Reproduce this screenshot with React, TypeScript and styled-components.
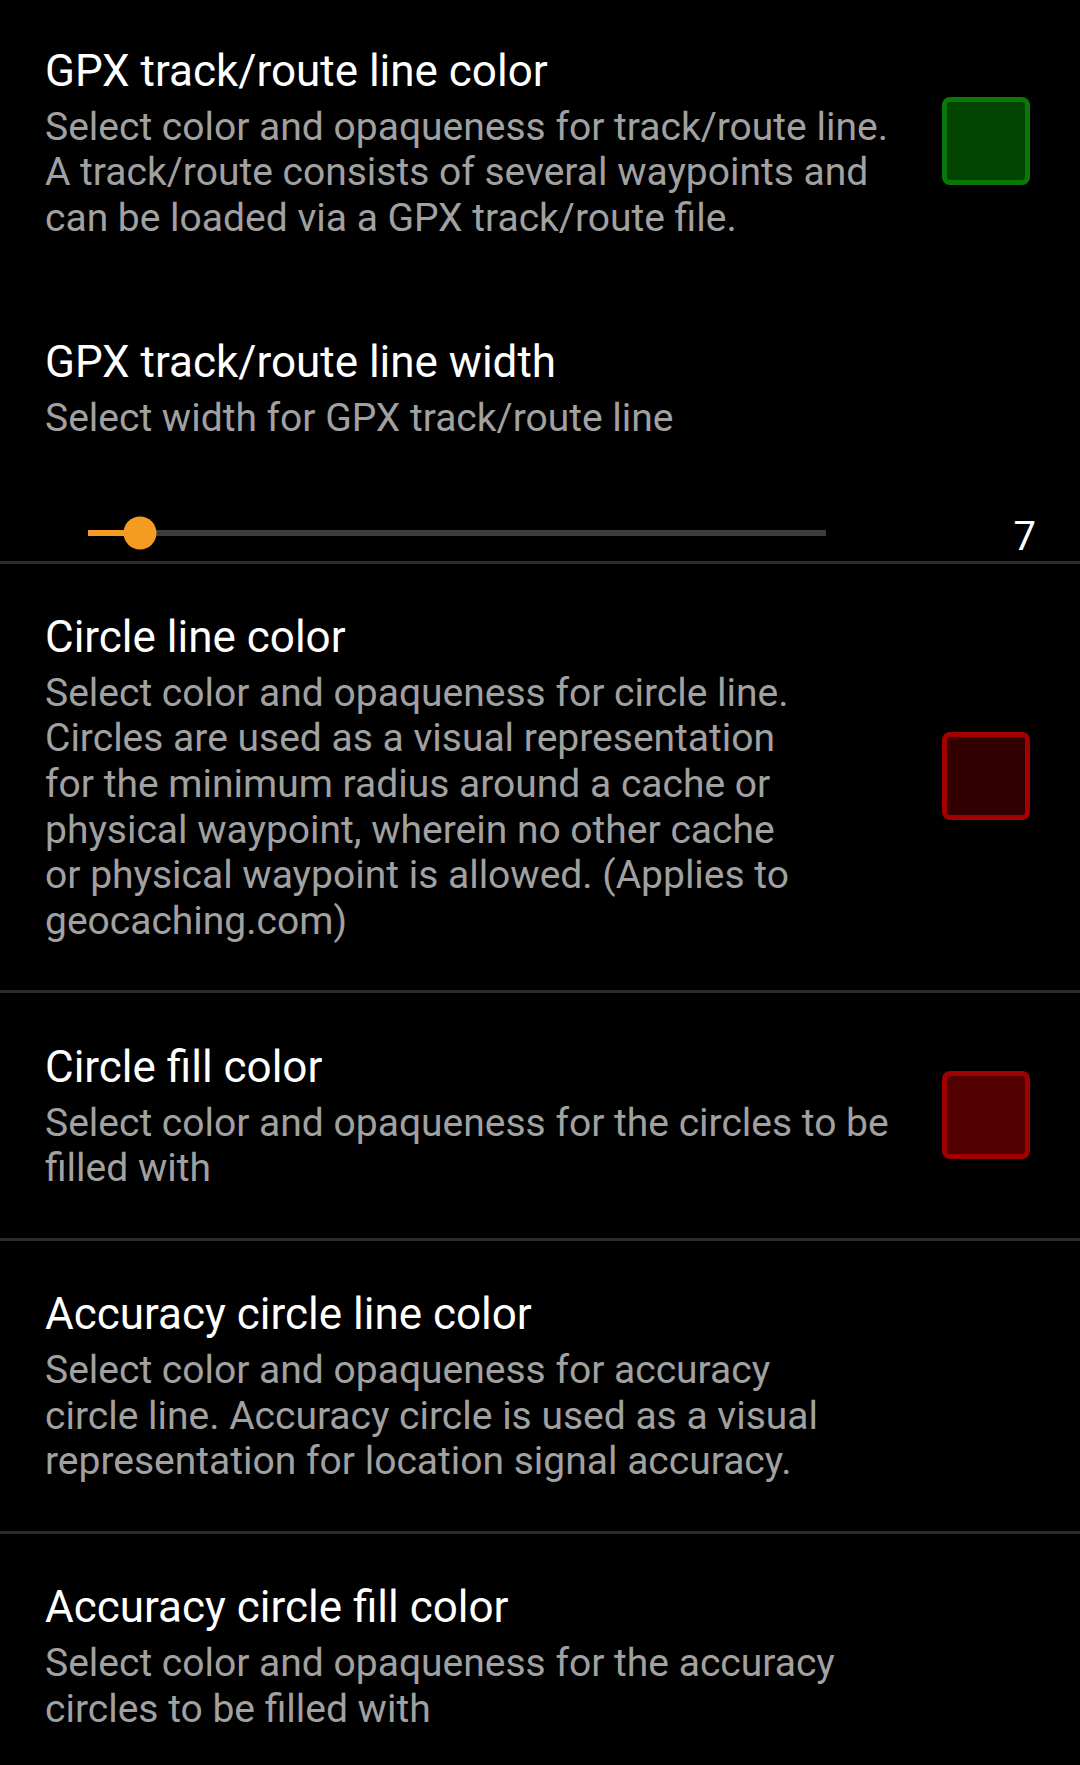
import React from "react";
import styled, { createGlobalStyle } from "styled-components";

const GlobalStyle = createGlobalStyle`
  html, body {
    margin: 0;
    padding: 0;
    background: #000;
  }
  body {
    font-family: Roboto, "Noto Sans", "Liberation Sans", sans-serif;
    -webkit-font-smoothing: antialiased;
  }
`;

const Page = styled.div`
  width: 1080px;
  min-height: 1765px;
  background: #000;
  display: flex;
  flex-direction: column;
  overflow: hidden;
`;

const Item = styled.section<{ $divider?: boolean; $top?: number; $bottom?: number }>`
  display: flex;
  flex-direction: column;
  border-top: ${(p) => (p.$divider ? "3px solid #2b2b2b" : "none")};
  padding-top: ${(p) => p.$top ?? 50.2}px;
  padding-bottom: ${(p) => p.$bottom ?? 46}px;
`;

const Row = styled.div`
  display: flex;
  align-items: center;
  padding: 0 50px 0 45px;
`;

const TextBlock = styled.div`
  flex: 1;
  min-width: 0;
  display: flex;
  flex-direction: column;
`;

const Title = styled.div`
  color: #ffffff;
  font-size: 44px;
  line-height: 46px;
  font-weight: 400;
  white-space: nowrap;
`;

const Summary = styled.div<{ $gap?: number }>`
  margin-top: ${(p) => p.$gap ?? 11}px;
  color: #a1a1a1;
  font-size: 39px;
  line-height: 45.6px;
  font-weight: 400;
`;

const Line = styled.span`
  display: block;
  white-space: nowrap;
`;

const Swatch = styled.div<{ $border: string; $fill: string }>`
  flex: none;
  width: 88px;
  height: 88px;
  box-sizing: border-box;
  border: 5px solid ${(p) => p.$border};
  border-radius: 8px;
  background: ${(p) => p.$fill};
  margin-left: 24px;
  margin-bottom: 6px;
`;

const SliderRow = styled.div<{ $gap: number }>`
  display: flex;
  align-items: center;
  height: 44px;
  margin-top: ${(p) => p.$gap}px;
  padding: 0 44px 0 88px;
`;

const Track = styled.div`
  position: relative;
  width: 738px;
  height: 6px;
  background: #3c3c3c;
`;

const ActiveTrack = styled.div`
  height: 100%;
  background: #f49b22;
`;

const Thumb = styled.div`
  position: absolute;
  top: 50%;
  width: 33px;
  height: 33px;
  border-radius: 50%;
  background: #f49b22;
  transform: translate(-50%, -50%);
`;

const Value = styled.div`
  margin-left: auto;
  color: #ffffff;
  font-size: 40px;
  line-height: 44px;
  padding-top: 7px;
`;

type Pref = {
  title: string;
  lines: string[];
  swatch?: { border: string; fill: string };
  divider?: boolean;
  top?: number;
  bottom?: number;
};

const SwatchPref: React.FC<Pref> = ({ title, lines, swatch, divider, top, bottom }) => (
  <Item $divider={divider} $top={top} $bottom={bottom}>
    <Row>
      <TextBlock>
        <Title>{title}</Title>
        <Summary>
          {lines.map((l, i) => (
            <Line key={i}>{l}</Line>
          ))}
        </Summary>
      </TextBlock>
      {swatch && <Swatch $border={swatch.border} $fill={swatch.fill} />}
    </Row>
  </Item>
);

const SliderPref: React.FC<{ value: number; min: number; max: number }> = ({ value, min, max }) => {
  const pct = ((value - min) / (max - min)) * 100;
  return (
    <Item $top={52.4} $bottom={5.5}>
      <Row>
        <TextBlock>
          <Title>GPX track/route line width</Title>
          <Summary $gap={10.5}>
            <Line>Select width for GPX track/route line</Line>
          </Summary>
        </TextBlock>
      </Row>
      <SliderRow $gap={70}>
        <Track>
          <ActiveTrack style={{ width: `${pct}%` }} />
          <Thumb style={{ left: `${pct}%` }} />
        </Track>
        <Value>{value}</Value>
      </SliderRow>
    </Item>
  );
};

export default function App() {
  return (
    <Page>
      <GlobalStyle />
      <SwatchPref
        title="GPX track/route line color"
        top={47.5}
        bottom={45.4}
        lines={[
          "Select color and opaqueness for track/route line.",
          "A track/route consists of several waypoints and",
          "can be loaded via a GPX track/route file.",
        ]}
        swatch={{ border: "#097809", fill: "#004400" }}
      />
      <SliderPref value={7} min={1} max={86} />
      <SwatchPref
        divider
        title="Circle line color"
        lines={[
          "Select color and opaqueness for circle line.",
          "Circles are used as a visual representation",
          "for the minimum radius around a cache or",
          "physical waypoint, wherein no other cache",
          "or physical waypoint is allowed. (Applies to",
          "geocaching.com)",
        ]}
        swatch={{ border: "#a40000", fill: "#320000" }}
      />
      <SwatchPref
        divider
        title="Circle fill color"
        lines={["Select color and opaqueness for the circles to be", "filled with"]}
        swatch={{ border: "#a00000", fill: "#520000" }}
      />
      <SwatchPref
        divider
        title="Accuracy circle line color"
        lines={[
          "Select color and opaqueness for accuracy",
          "circle line. Accuracy circle is used as a visual",
          "representation for location signal accuracy.",
        ]}
      />
      <SwatchPref
        divider
        title="Accuracy circle fill color"
        lines={["Select color and opaqueness for the accuracy", "circles to be filled with"]}
      />
    </Page>
  );
}
